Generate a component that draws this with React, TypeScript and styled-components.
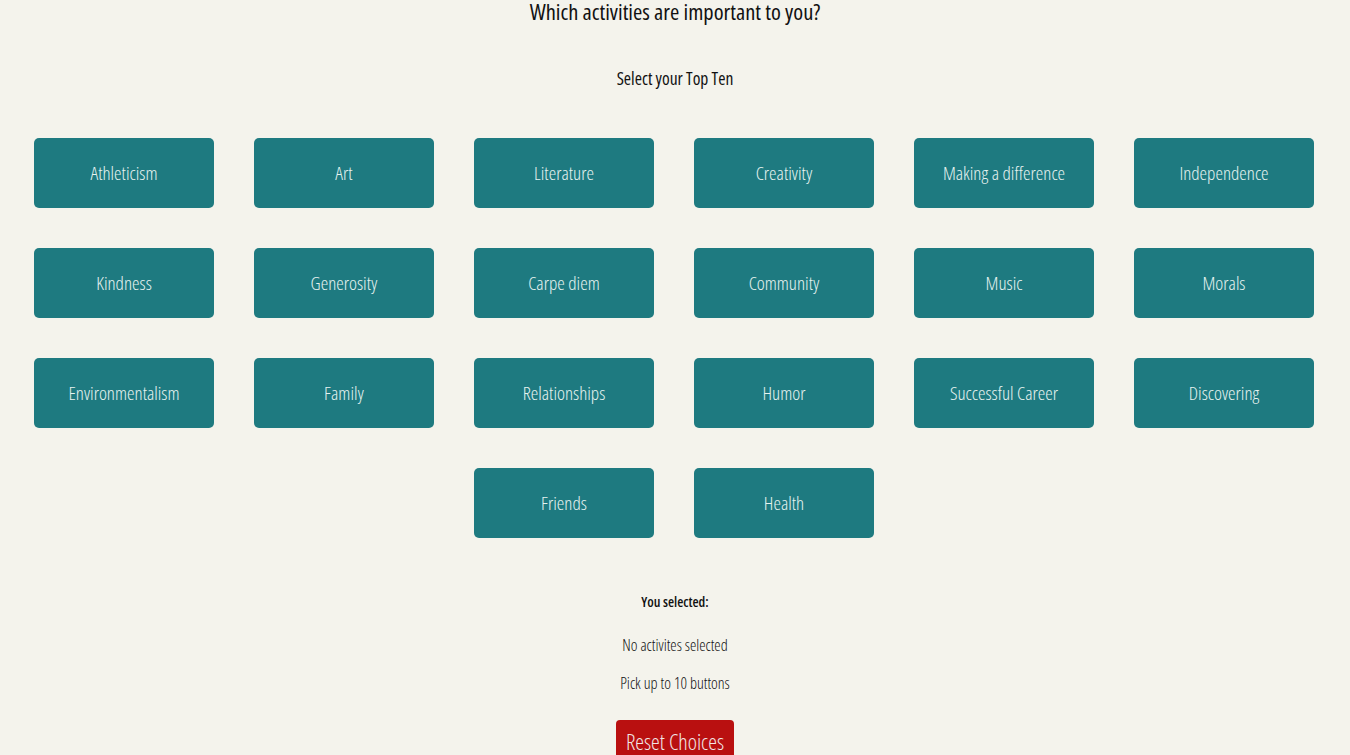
import React, { useState } from 'react';
import styled, { createGlobalStyle } from 'styled-components';

const ACTIVITIES = [
  'Athleticism', 'Art', 'Literature', 'Creativity', 'Making a difference', 'Independence',
  'Kindness', 'Generosity', 'Carpe diem', 'Community', 'Music', 'Morals',
  'Environmentalism', 'Family', 'Relationships', 'Humor', 'Successful Career', 'Discovering',
  'Friends', 'Health',
];

const GlobalStyle = createGlobalStyle`
  body {
    margin: 0;
    background: #f4f3ec;
    font-family: 'Open Sans', 'Liberation Sans', sans-serif;
    font-stretch: 75%;
    color: #111;
  }
`;

const App: React.FC = () => {
  const [picked, setPicked] = useState<string[]>([]);

  const toggle = (name: string) => {
    if (picked.includes(name)) setPicked(picked.filter((p) => p !== name));
    else if (picked.length < 10) setPicked([...picked, name]);
  };

  return (
    <Page>
      <GlobalStyle />
      <Title>Which activities are important to you?</Title>
      <Subtitle>Select your Top Ten</Subtitle>

      <Grid>
        {ACTIVITIES.map((a) => (
          <ActivityBtn key={a} $active={picked.includes(a)} onClick={() => toggle(a)}>
            {a}
          </ActivityBtn>
        ))}
      </Grid>

      <Summary>
        <SelectedLabel>You selected:</SelectedLabel>
        <Note>{picked.length ? picked.join(', ') : 'No activites selected'}</Note>
        <Note $gap={16}>Pick up to 10 buttons</Note>
        <ResetBtn onClick={() => setPicked([])}>Reset Choices</ResetBtn>
      </Summary>
    </Page>
  );
};

const Page = styled.div`
  display: flex;
  flex-direction: column;
  align-items: center;
  text-align: center;
`;

const Title = styled.h1`
  margin: -5px 0 0;
  font-size: 22.5px;
  font-weight: 500;
  line-height: 33px;
`;

const Subtitle = styled.p`
  margin: 38px 0 0;
  font-size: 17.5px;
  font-weight: 500;
  line-height: 24px;
`;

const Grid = styled.div`
  display: flex;
  flex-wrap: wrap;
  justify-content: center;
  width: 1320px;
  margin: 28px 2px 0 0;
`;

const ActivityBtn = styled.button<{ $active: boolean }>`
  width: 180px;
  height: 70px;
  margin: 20px;
  border: none;
  border-radius: 5px;
  background: ${(p) => (p.$active ? '#12565a' : '#1e7a80')};
  color: #e6f3f0;
  font-family: inherit;
  font-stretch: 75%;
  font-size: 19px;
  font-weight: 300;
  cursor: pointer;
`;

const Summary = styled.div`
  display: flex;
  flex-direction: column;
  align-items: center;
  margin-top: 34px;
`;

const SelectedLabel = styled.div`
  font-size: 14px;
  font-weight: 600;
  line-height: 20px;
`;

const Note = styled.div<{ $gap?: number }>`
  margin-top: ${(p) => p.$gap ?? 22}px;
  font-size: 16px;
  font-weight: 300;
  line-height: 22px;
`;

const ResetBtn = styled.button`
  margin-top: 26px;
  padding: 6px 10px;
  border: none;
  border-radius: 4px 4px 0 0;
  background: #b91010;
  color: #f1e6e6;
  font-family: inherit;
  font-stretch: 75%;
  font-size: 22px;
  font-weight: 300;
  line-height: 30px;
  cursor: pointer;
`;

export default App;
